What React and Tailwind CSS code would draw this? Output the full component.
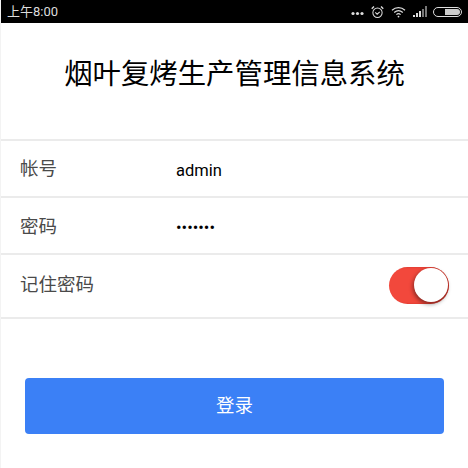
const cjk = "font-['Roboto','Noto_Sans_CJK_SC',sans-serif]";

function StatusIcons() {
  return (
    <div className="flex items-center">
      <svg width="13" height="5" viewBox="0 0 13 5" className="mr-[7px] mt-[4px]">
        <circle cx="2" cy="2.5" r="1.6" fill="#ddd" />
        <circle cx="6.5" cy="2.5" r="1.6" fill="#ddd" />
        <circle cx="11" cy="2.5" r="1.6" fill="#ddd" />
      </svg>
      <svg width="13" height="14" viewBox="0 0 14 14" fill="none" stroke="#ddd" strokeWidth="1.1" className="mr-[7px]">
        <circle cx="7" cy="7.8" r="5" />
        <path d="M4.6 7.4 L6.6 9.4 L9.4 6.8" />
        <path d="M0.8 3.4 L3.2 1 M13.2 3.4 L10.8 1" strokeWidth="1.5" />
      </svg>
      <svg width="15" height="12" viewBox="0 0 15 12" fill="none" stroke="#ddd" strokeWidth="1.2" className="mr-[7px]">
        <path d="M1 4.2 C4.8 0.8 10.2 0.8 14 4.2" />
        <path d="M3.2 6.5 C5.8 4.3 9.2 4.3 11.8 6.5" />
        <path d="M5.4 8.6 C6.6 7.6 8.4 7.6 9.6 8.6" />
        <circle cx="7.5" cy="10.6" r="0.9" fill="#ddd" stroke="none" />
      </svg>
      <svg width="14" height="11" viewBox="0 0 14 11" className="mr-[6px]">
        <rect x="0" y="9" width="2" height="2" fill="#ddd" />
        <rect x="3" y="7" width="2" height="4" fill="#ddd" />
        <rect x="6" y="5" width="2" height="6" fill="#ddd" />
        <rect x="9" y="3" width="2" height="8" fill="#777" />
        <rect x="12" y="0" width="2" height="11" fill="#777" />
      </svg>
      <div className="w-[29px] h-[10px] rounded-full border border-[#ddd] flex justify-end p-px">
        <div className="w-[15px] h-full rounded-r-full bg-[#ccc]" />
      </div>
    </div>
  );
}

function Row({ label, children, height = 'h-[57px]', labelClass = 'mt-[2px]' }) {
  return (
    <div className={`flex items-center ${height} pl-[19px] border-b-2 border-[#ebebeb]`}>
      <div className={`w-[156px] text-[18.5px] text-[#4a4a4a] ${labelClass}`}>{label}</div>
      {children}
    </div>
  );
}

export default function App() {
  return (
    <div className={`w-[468px] h-[468px] bg-white overflow-hidden border-l border-[#f3f3f3] ${cjk}`}>
      <div className="h-[23px] bg-black flex items-center justify-between pl-[6px] pr-[6px]">
        <span className="text-[13px] text-[#ddd] leading-none">上午8:00</span>
        <StatusIcons />
      </div>
      <div className="h-[116px] flex items-center justify-center text-[28.4px] text-black leading-none pb-[11px]">
        烟叶复烤生产管理信息系统
      </div>
      <div className="border-t-2 border-[#ebebeb]">
        <Row label="帐号">
          <span className="text-[16.5px] text-black mt-[6px]">admin</span>
        </Row>
        <Row label="密码" labelClass="mt-[4px]">
          <span className="text-[16.5px] text-black mt-[6px]">•••••••</span>
        </Row>
        <Row label="记住密码" height="h-[64px]" labelClass="">
          <div className="ml-auto mr-[19px] mb-[2px] w-[60px] h-[37px] rounded-full bg-[#f2483c] flex items-center justify-end pr-[1px] shadow-[inset_-3px_0_2px_rgba(160,30,20,0.5)]">
            <div className="w-[34px] h-[34px] rounded-full bg-white shadow-[-1px_2px_4px_rgba(0,0,0,0.45)]" />
          </div>
        </Row>
      </div>
      <div className="px-[24px] pt-[59px]">
        <button className="w-full h-[56px] rounded-[4px] bg-[#3b80f6] text-white text-[18.5px] pt-[1px]">登录</button>
      </div>
    </div>
  );
}
